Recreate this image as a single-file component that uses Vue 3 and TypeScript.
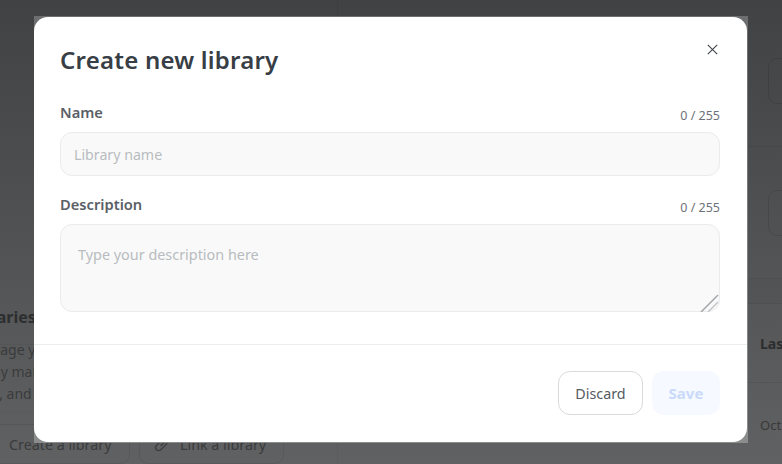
<script setup lang="ts">
const fields = {
  name: { label: 'Name', placeholder: 'Library name', count: '0 / 255' },
  description: { label: 'Description', placeholder: 'Type your description here', count: '0 / 255' },
}
</script>

<template>
  <div class="page">
    <div class="backdrop">
      <section class="left">
        <h2 class="lib-title">Libraries</h2>
        <div class="lib-rule"></div>
        <p class="lib-text">Manage your<br />easily many<br />tags, and</p>
        <div class="lib-actions">
          <span class="ghost first">Create a library</span>
          <span class="ghost second">
            <svg class="clip" width="18" height="18" viewBox="0 0 18 18" fill="none">
              <path d="M16.500 2 8 10.500M12 2 3.500 10.500a3 3 0 0 0 4.200 4.300L14 8.500" stroke="#3c3d3e" stroke-width="1.200" stroke-linecap="round" />
            </svg>
            Link a library
          </span>
        </div>
      </section>
      <section class="right">
        <div class="row r1"><span class="box"></span></div>
        <div class="row r2"><span class="box"></span></div>
        <div class="row r3"></div>
        <div class="row r4"><b>Last</b></div>
        <div class="row r5"><span>Oct</span></div>
      </section>
    </div>

    <div class="frame">
      <div class="modal" role="dialog">
        <header class="head">
          <h1>Create new library</h1>
          <button class="close" aria-label="Close">
            <svg width="11" height="11" viewBox="0 0 11 11" fill="none">
              <path d="M.8.8l9.400 9.400M10.200.8.8 10.200" stroke="#3d4249" stroke-width="1.100" />
            </svg>
          </button>
        </header>

        <div class="body">
          <div class="field">
            <div class="label-row">
              <label>{{ fields.name.label }}</label>
              <span class="count">{{ fields.name.count }}</span>
            </div>
            <input class="input" :placeholder="fields.name.placeholder" />
          </div>
          <div class="field">
            <div class="label-row">
              <label>{{ fields.description.label }}</label>
              <span class="count">{{ fields.description.count }}</span>
            </div>
            <div class="area-wrap">
              <textarea class="area" :placeholder="fields.description.placeholder"></textarea>
              <svg class="grip" width="20" height="20" viewBox="0 0 20 20" fill="none">
                <path d="M2 20 19 3" stroke="#a3a5a7" stroke-width="1.500" />
                <path d="M9 20 19 10" stroke="#c4c6c8" stroke-width="1.500" />
              </svg>
            </div>
          </div>
        </div>

        <footer class="foot">
          <button class="btn discard">Discard</button>
          <button class="btn save">Save</button>
        </footer>
      </div>
    </div>
  </div>
</template>

<style scoped>
.page {
  position: relative;
  width: 782px;
  height: 464px;
  overflow: hidden;
  font-family: "Noto Sans", "Open Sans", sans-serif;
  background: linear-gradient(180deg, #414243 0%, #606162 100%);
}
.backdrop {
  display: flex;
  height: 100%;
}
.left {
  flex: none;
  width: 338px;
  height: 100%;
  border-right: 1px solid rgba(0, 0, 0, 0.05);
  padding-top: 306px;
  box-sizing: border-box;
  color: #343536;
}
.lib-title {
  margin: 0 0 0 -34px;
  font-size: 16px;
  line-height: 22px;
  font-weight: 700;
  color: #2d2e2f;
  white-space: nowrap;
}
.lib-rule {
  height: 1px;
  margin-top: 16px;
  background: rgba(0, 0, 0, 0.04);
}
.lib-text {
  margin: -6px 0 0 -29px;
  font-size: 14px;
  line-height: 22px;
  color: #3a3b3c;
  white-space: nowrap;
  height: 66px;
}
.lib-actions {
  display: flex;
  gap: 9px;
  margin-top: 7px;
  padding-top: 11px;
  border-top: 1px solid rgba(0, 0, 0, 0.02);
}
.ghost {
  display: flex;
  flex: none;
  align-items: center;
  gap: 9px;
  height: 40px;
  box-sizing: border-box;
  border: 1px solid rgba(0, 0, 0, 0.08);
  border-radius: 9px;
  font-size: 14.300px;
  color: #3a3b3c;
  white-space: nowrap;
}
.first {
  width: 130px;
  padding-left: 9px;
  border-left: 0;
  border-radius: 0 9px 9px 0;
}
.second {
  width: 145px;
  padding-left: 13px;
}
.right {
  flex: 1;
  min-width: 0;
}
.row {
  display: flex;
  align-items: flex-start;
  border-bottom: 1px solid rgba(0, 0, 0, 0.06);
  box-sizing: border-box;
  overflow: hidden;
  white-space: nowrap;
}
.r1 { height: 147px; padding: 58px 0 0 430px; }
.r2 { height: 132px; padding: 43px 0 0 430px; }
.r3 { height: 25px; background: rgba(0, 0, 0, 0.02); }
.r4 { height: 79px; padding-left: 422px; align-items: center; font-size: 14px; color: #2c2d2e; }
.r5 { height: 81px; padding: 33px 0 0 422px; font-size: 13px; color: #39393a; border: 0; }
.box {
  display: block;
  width: 60px;
  height: 44px;
  flex: none;
  border: 1px solid rgba(0, 0, 0, 0.1);
  border-radius: 9px;
}
.frame {
  position: absolute;
  left: 34px;
  top: 16px;
  width: 714px;
  height: 427px;
  padding: 1px 1px 1px 0;
  box-sizing: border-box;
  background: linear-gradient(180deg, #6d6e6f 0%, #8b8c8c 100%);
}
.modal {
  display: flex;
  flex-direction: column;
  height: 100%;
  box-sizing: border-box;
  background: #fff;
  border-radius: 14px;
  color: #3a4148;
}
.head {
  display: flex;
  justify-content: space-between;
  padding: 26px 29px 0 26px;
  height: 75px;
  box-sizing: border-box;
}
h1 {
  margin: 0;
  font-size: 24px;
  line-height: 34px;
  font-weight: 600;
  letter-spacing: 0.22px;
  color: #383e45;
}
.close {
  width: 11px;
  height: 11px;
  margin-top: 1px;
  padding: 0;
  border: 0;
  background: none;
  display: flex;
}
.body {
  padding: 0 27px 0 26px;
  display: flex;
  flex-direction: column;
  gap: 8px;
  height: 253px;
  box-sizing: border-box;
  border-bottom: 1px solid #eceded;
}
.label-row {
  display: flex;
  justify-content: space-between;
  align-items: flex-end;
  height: 40px;
  padding-bottom: 10px;
  box-sizing: border-box;
}
label {
  font-size: 14.700px;
  line-height: 20px;
  font-weight: 600;
  color: #5a6066;
}
.count {
  font-size: 12.500px;
  line-height: 16px;
  color: #6d7278;
  margin-bottom: -1.500px;
}
.input,
.area {
  display: block;
  width: 100%;
  box-sizing: border-box;
  background: #f9f9f9;
  border: 1px solid #ebebeb;
  border-radius: 12px;
  font: inherit;
  font-size: 14.200px;
  outline: none;
}
.input {
  height: 44px;
  padding: 0 13px;
}
.area-wrap {
  position: relative;
}
.area {
  height: 88px;
  padding: 20px 17px;
  font-size: 14.400px;
  line-height: 20px;
  resize: none;
}
.grip {
  position: absolute;
  right: 1px;
  bottom: 0;
}
.input::placeholder,
.area::placeholder {
  color: #b8bcc0;
  opacity: 1;
}
.foot {
  display: flex;
  justify-content: flex-end;
  gap: 9px;
  padding: 26px 27px 0 0;
}
.btn {
  height: 44px;
  box-sizing: border-box;
  border-radius: 12px;
  font: inherit;
  font-size: 14.300px;
}
.discard {
  width: 85px;
  background: #fff;
  border: 1px solid #dadada;
  color: #555b61;
}
.save {
  width: 68px;
  background: #f6f9ff;
  border: 0;
  color: #c9dafa;
  font-size: 15px;
  font-weight: 700;
}
</style>
